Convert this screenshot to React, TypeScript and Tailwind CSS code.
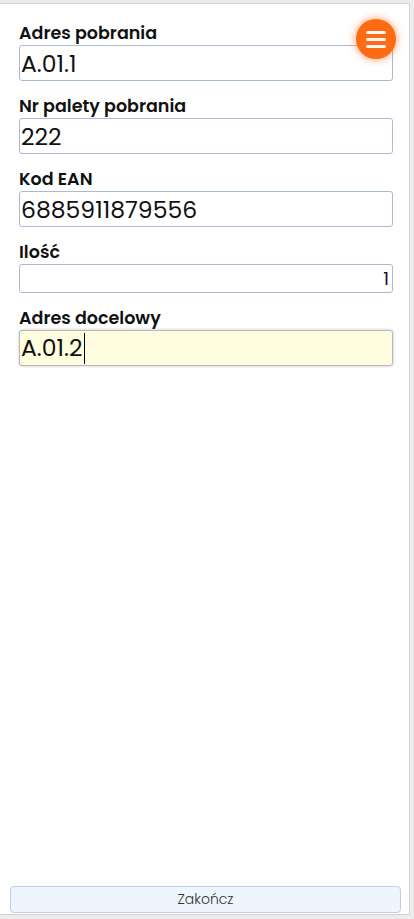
import React from 'react'

const FONT = { fontFamily: '"Poppins", "Open Sans", "Noto Sans", sans-serif' }

function Field({ label, value, big = true, align = 'left' }: { label: string; value: string; big?: boolean; align?: 'left' | 'right' }) {
  return (
    <div className="flex flex-col">
      <label className="h-6 text-[17.5px] leading-6 font-semibold text-[#111]">{label}</label>
      <input
        readOnly
        value={value}
        className={
          'w-full border border-[#a9bbd3] rounded-[3px] bg-white text-[#111] outline-none ' +
          (big ? 'h-9 px-[1px] text-[23.5px]' : 'h-[29px] px-[3px] text-[18px]') +
          (align === 'right' ? ' text-right' : '')
        }
      />
    </div>
  )
}

export default function App() {
  return (
    <div className="h-screen w-full bg-[#ececec] pt-[3px] pr-[4px] pb-[4px] flex" style={FONT}>
      <div className="relative flex-1 flex flex-col bg-white border-t border-r border-b border-[#d2d2d2]">
        <div className="flex flex-col gap-[13px] pl-[19px] pr-[16px] pt-[17px]">
          <Field label="Adres pobrania" value="A.01.1" />
          <Field label="Nr palety pobrania" value="222" />
          <Field label="Kod EAN" value="6885911879556" />
          <Field label="Ilość" value="1" big={false} align="right" />
          <div className="flex flex-col">
            <label className="h-6 text-[17.5px] leading-6 font-semibold text-[#111]">Adres docelowy</label>
            <div className="h-9 w-full flex items-center px-[1px] border border-[#b9b9b9] rounded-[3px] bg-[#fffddf] shadow-[0_0_3px_rgba(0,0,0,0.25)] text-[23.5px] text-[#111]">
              <span>A.01.2</span>
              <span className="inline-block w-px h-[31px] bg-black ml-[1px]" />
            </div>
          </div>
        </div>

        <button
          type="button"
          className="absolute top-[15px] right-[13px] w-10 h-10 rounded-full bg-[#ff6a14] shadow-[0_0_8px_rgba(255,106,20,0.7)] flex flex-col items-center justify-center gap-[4px]"
        >
          <span className="block w-5 h-[3px] rounded bg-white/95" />
          <span className="block w-5 h-[3px] rounded bg-white/95" />
          <span className="block w-5 h-[3px] rounded bg-white/95" />
        </button>

        <div className="mt-auto pl-[10px] pr-[8px] pb-[1px]">
          <button
            type="button"
            className="w-full h-[27px] border border-[#bfcfe4] rounded-[4px] bg-[#eef5fe] text-[14px] text-[#333] font-light"
          >
            Zakończ
          </button>
        </div>
      </div>
    </div>
  )
}
